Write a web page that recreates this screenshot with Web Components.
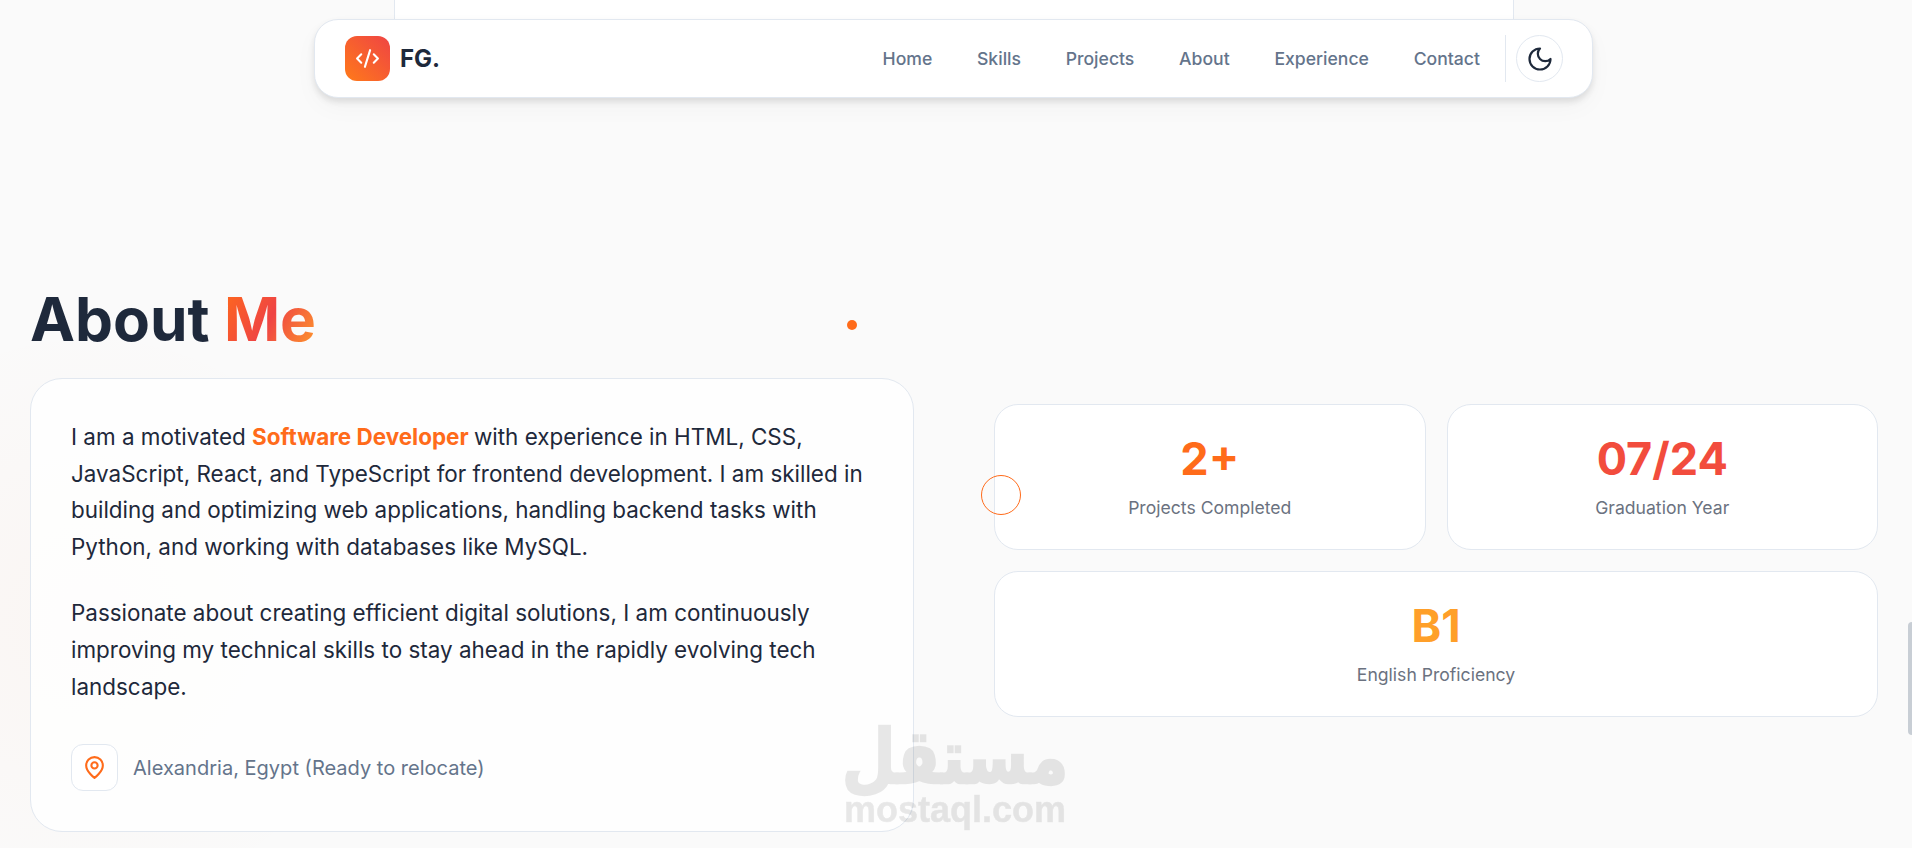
<!DOCTYPE html>
<html lang="en">
<head>
<meta charset="utf-8">
<title>FG. Portfolio</title>
<style>
  html, body { margin: 0; height: 848px; overflow: hidden; }
  body {
    background: radial-gradient(circle at 90px 620px, rgba(255, 107, 26, 0.03), rgba(255, 107, 26, 0) 300px), #fafafa;
    font-family: Inter, "Liberation Sans", sans-serif;
    color: #1e293b;
    position: relative;
  }
</style>
</head>
<body>
  <hero-tail></hero-tail>
  <site-nav>
    <nav-link>Home</nav-link>
    <nav-link>Skills</nav-link>
    <nav-link>Projects</nav-link>
    <nav-link>About</nav-link>
    <nav-link>Experience</nav-link>
    <nav-link>Contact</nav-link>
  </site-nav>
  <about-section>
    <about-card>
      <p>I am a motivated <hl-text>Software Developer</hl-text> with experience in HTML, CSS, JavaScript, React, and TypeScript for frontend development. I am skilled in building and optimizing web applications, handling backend tasks with Python, and working with databases like MySQL.</p>
      <p>Passionate about creating efficient digital solutions, I am continuously improving my technical skills to stay ahead in the rapidly evolving tech landscape.</p>
      <location-row slot="footer">Alexandria, Egypt (Ready to relocate)</location-row>
    </about-card>
    <stat-card slot="stats" value="2+" color="#ff6b1a">Projects Completed</stat-card>
    <stat-card slot="stats" value="07/24" color="#f24c3d">Graduation Year</stat-card>
    <stat-card slot="stats" value="B1" color="#ff9f29" wide>English Proficiency</stat-card>
  </about-section>
  <cursor-trail></cursor-trail>
  <page-scrollbar></page-scrollbar>
  <brand-watermark></brand-watermark>

<script>
class HeroTail extends HTMLElement {
    constructor() {
        super();
        this.attachShadow({ mode: 'open' }).innerHTML = `
            <style>
                :host {
                    display: block;
                    box-sizing: border-box;
                    width: 1120px;
                    height: 40px;
                    margin-left: 394px;
                    background: #fff;
                    border: 1px solid #e2e8f0;
                    border-width: 0 1px;
                }
            </style>
        `;
    }
}

class SiteNav extends HTMLElement {
    constructor() {
        super();
        this.attachShadow({ mode: 'open' }).innerHTML = `
            <style>
                :host {
                    position: absolute;
                    top: 19px;
                    left: 314px;
                    width: 1279px;
                    height: 79px;
                    box-sizing: border-box;
                    display: flex;
                    align-items: center;
                    padding: 0 29px 0 30px;
                    background: #fff;
                    border: 1px solid #e2e8f0;
                    border-radius: 24px;
                    box-shadow: 0 4px 6px rgba(0, 0, 0, 0.1), 0 10px 24px rgba(0, 0, 0, 0.03);
                    z-index: 10;
                }
                .logo { display: flex; align-items: center; gap: 10px; margin-right: auto; }
                .mark {
                    width: 45px;
                    height: 45px;
                    border-radius: 12px;
                    background: linear-gradient(45deg, #ff7a1a, #ef4444);
                    display: flex;
                    align-items: center;
                    justify-content: center;
                }
                .name { font-size: 24px; font-weight: 700; color: #1e293b; }
                .links { display: flex; gap: 44.75px; }
                .sep { width: 1px; height: 47px; background: #e2e8f0; margin: 0 10px 0 25px; }
                .toggle {
                    width: 47px;
                    height: 47px;
                    box-sizing: border-box;
                    border: 1px solid #e2e8f0;
                    border-radius: 50%;
                    display: flex;
                    align-items: center;
                    justify-content: center;
                }
            </style>
            <div class="logo">
                <div class="mark">
                    <svg width="25" height="25" viewBox="0 0 24 24" fill="none" stroke="#fff" stroke-width="2" stroke-linecap="round" stroke-linejoin="round"><path d="m18 16 4-4-4-4"/><path d="m6 8-4 4 4 4"/><path d="m14.5 4-5 16"/></svg>
                </div>
                <span class="name">FG.</span>
            </div>
            <div class="links"><slot></slot></div>
            <div class="sep"></div>
            <div class="toggle">
                <svg width="28" height="28" viewBox="0 0 24 24" fill="none" stroke="#1e293b" stroke-width="1.9" stroke-linecap="round" stroke-linejoin="round"><path d="M12 3a6 6 0 0 0 9 9 9 9 0 1 1-9-9Z"/></svg>
            </div>
        `;
    }
}

class NavLink extends HTMLElement {
    constructor() {
        super();
        this.attachShadow({ mode: 'open' }).innerHTML = `
            <style>
                :host { display: block; font-size: 17.6px; font-weight: 500; color: #64748b; }
            </style>
            <slot></slot>
        `;
    }
}

class AboutSection extends HTMLElement {
    constructor() {
        super();
        this.attachShadow({ mode: 'open' }).innerHTML = `
            <style>
                :host {
                    display: grid;
                    grid-template-columns: 884px 884px;
                    column-gap: 80px;
                    align-items: center;
                    padding: 244px 34px 0 30px;
                }
                h2 {
                    margin: 0 0 23px;
                    font-size: 60.3px;
                    line-height: 71px;
                    font-weight: 700;
                    color: #1e293b;
                }
                h2 span {
                    background: linear-gradient(120deg, #ff6b1a, #ef4444 50%, #ff9f29);
                    -webkit-background-clip: text;
                    background-clip: text;
                    color: transparent;
                }
                .stats {
                    display: grid;
                    grid-template-columns: 1fr 1fr;
                    gap: 21px;
                    margin-top: 5px;
                }
            </style>
            <div>
                <h2>About <span>Me</span></h2>
                <slot></slot>
            </div>
            <div class="stats"><slot name="stats"></slot></div>
        `;
    }
}

class AboutCard extends HTMLElement {
    constructor() {
        super();
        this.attachShadow({ mode: 'open' }).innerHTML = `
            <style>
                :host {
                    display: block;
                    box-sizing: border-box;
                    height: 454px;
                    padding: 40px;
                    background: rgba(255, 255, 255, 0.8);
                    border: 1px solid #e2e8f0;
                    border-radius: 32px;
                    font-size: 22.45px;
                    line-height: 36.6px;
                    color: #1e293b;
                }
                ::slotted(p) { margin: 0 0 30px; }
                .foot { margin-top: 39px; }
            </style>
            <slot></slot>
            <div class="foot"><slot name="footer"></slot></div>
        `;
    }
}

class HlText extends HTMLElement {
    constructor() {
        super();
        this.attachShadow({ mode: 'open' }).innerHTML = `
            <style>
                :host { color: #ff6b1a; font-weight: 700; }
            </style>
            <slot></slot>
        `;
    }
}

class LocationRow extends HTMLElement {
    constructor() {
        super();
        this.attachShadow({ mode: 'open' }).innerHTML = `
            <style>
                :host {
                    display: flex;
                    align-items: center;
                    gap: 15px;
                    font-size: 20.05px;
                    line-height: 30px;
                    color: #64748b;
                }
                .icon {
                    width: 47px;
                    height: 47px;
                    box-sizing: border-box;
                    background: #fff;
                    border: 1px solid #e2e8f0;
                    border-radius: 12px;
                    display: flex;
                    align-items: center;
                    justify-content: center;
                }
            </style>
            <div class="icon">
                <svg width="25" height="25" viewBox="0 0 24 24" fill="none" stroke="#ff6b1a" stroke-width="2" stroke-linecap="round" stroke-linejoin="round"><path d="M20 10c0 6-8 12-8 12s-8-6-8-12a8 8 0 0 1 16 0Z"/><circle cx="12" cy="10" r="3"/></svg>
            </div>
            <span><slot></slot></span>
        `;
    }
}

class StatCard extends HTMLElement {
    constructor() {
        super();
        this.attachShadow({ mode: 'open' }).innerHTML = `
            <style>
                :host {
                    display: flex;
                    flex-direction: column;
                    align-items: center;
                    justify-content: center;
                    box-sizing: border-box;
                    height: 146px;
                    background: #fff;
                    border: 1px solid #e2e8f0;
                    border-radius: 24px;
                }
                :host([wide]) { grid-column: span 2; }
                .value { font-size: 45px; line-height: 54px; font-weight: 700; }
                .label { font-size: 17.6px; line-height: 28px; color: #6b7280; margin-top: 8px; }
            </style>
            <div class="value"></div>
            <div class="label"><slot></slot></div>
        `;
    }

    connectedCallback() {
        const value = this.shadowRoot.querySelector('.value');
        value.textContent = this.getAttribute('value');
        value.style.color = this.getAttribute('color');
    }
}

class CursorTrail extends HTMLElement {
    constructor() {
        super();
        this.attachShadow({ mode: 'open' }).innerHTML = `
            <style>
                :host { display: block; }
                .dot, .ring { position: absolute; border-radius: 50%; box-sizing: border-box; z-index: 20; }
                .dot { left: 847px; top: 320px; width: 10px; height: 10px; background: #ff6b1a; }
                .ring { left: 981px; top: 475px; width: 40px; height: 40px; border: 1px solid #ff6b1a; }
            </style>
            <div class="dot"></div>
            <div class="ring"></div>
        `;
    }
}

class PageScrollbar extends HTMLElement {
    constructor() {
        super();
        this.attachShadow({ mode: 'open' }).innerHTML = `
            <style>
                :host {
                    position: absolute;
                    left: 1908px;
                    top: 622px;
                    width: 4px;
                    height: 113px;
                    background: #c8ced5;
                    border-radius: 4px 0 0 4px;
                }
            </style>
        `;
    }
}

class BrandWatermark extends HTMLElement {
    constructor() {
        super();
        this.attachShadow({ mode: 'open' }).innerHTML = `
            <style>
                :host {
                    position: absolute;
                    left: 844px;
                    top: 718px;
                    width: 222px;
                    display: flex;
                    flex-direction: column;
                    align-items: center;
                    color: #000;
                    opacity: 0.085;
                    font-weight: 700;
                    z-index: 30;
                }
                .ar {
                    font-family: "DejaVu Sans", sans-serif;
                    font-size: 62px;
                    line-height: 74px;
                    -webkit-text-stroke: 2px #000;
                    transform: scaleY(1.2);
                    transform-origin: 50% 30%;
                }
                .en { font-family: "Liberation Sans", sans-serif; font-size: 36px; line-height: 36px; -webkit-text-stroke: 0.6px #000; }
            </style>
            <div class="ar" lang="ar" dir="rtl">مستقل</div>
            <div class="en">mostaql.com</div>
        `;
    }
}

customElements.define('hero-tail', HeroTail);
customElements.define('site-nav', SiteNav);
customElements.define('nav-link', NavLink);
customElements.define('about-section', AboutSection);
customElements.define('about-card', AboutCard);
customElements.define('hl-text', HlText);
customElements.define('location-row', LocationRow);
customElements.define('stat-card', StatCard);
customElements.define('cursor-trail', CursorTrail);
customElements.define('page-scrollbar', PageScrollbar);
customElements.define('brand-watermark', BrandWatermark);
</script>
</body>
</html>
